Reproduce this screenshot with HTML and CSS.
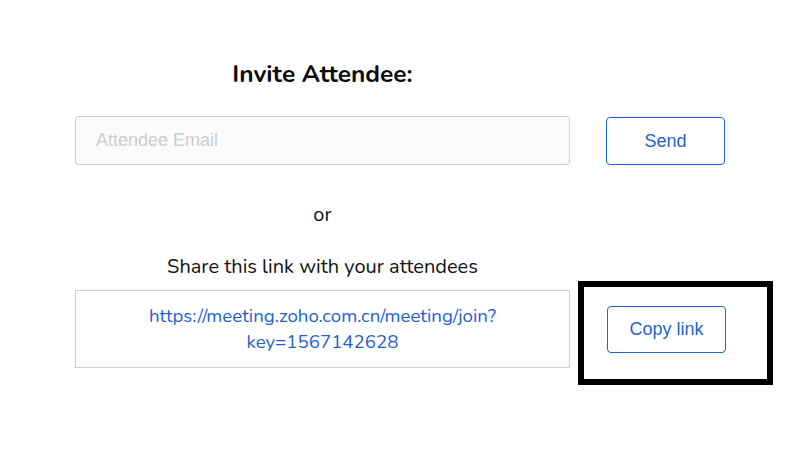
FILE: index.html
```html
<!DOCTYPE html>
<html>
<head>
<meta charset="utf-8">
<link rel="stylesheet" href="styles.css">
</head>
<body>
<div class="page">
  <h1 class="title">Invite Attendee:</h1>
  <div class="row invite-row">
    <input class="email" type="text" placeholder="Attendee Email">
    <button class="btn send">Send</button>
  </div>
  <div class="or">or</div>
  <div class="share">Share this link with your attendees</div>
  <div class="row link-row">
    <div class="link-box">
      <a class="link">https://meeting.zoho.com.cn/meeting/join?<br>key=1567142628</a>
    </div>
    <div class="highlight">
      <button class="btn copy">Copy link</button>
    </div>
  </div>
</div>
</body>
</html>
```

FILE: styles.css
```css
html, body {
  margin: 0;
  padding: 0;
  background: #fff;
}
.page {
  padding: 58px 0 0 75px;
  font-family: "Nunito", "Lato", "Open Sans", sans-serif;
  color: #111;
}
.title {
  width: 495px;
  margin: 0;
  text-align: center;
  font-size: 24.5px;
  font-weight: 700;
  line-height: 32px;
  color: #0a0a0a;
}
.row {
  display: flex;
}
.invite-row {
  margin-top: 26px;
  align-items: flex-start;
}
.email {
  box-sizing: border-box;
  width: 495px;
  height: 49px;
  border: 1px solid #cfcfcf;
  border-radius: 3px;
  background: #fbfbfb;
  padding: 0 20px;
  font-family: "Liberation Sans", Arial, sans-serif;
  font-size: 18px;
  outline: none;
}
.email::placeholder {
  color: #cdcdcd;
}
.btn {
  box-sizing: border-box;
  width: 119px;
  height: 48px;
  background: #fff;
  border: 1px solid #1f63d2;
  border-radius: 4px;
  color: #1f63d2;
  font-family: "Liberation Sans", Arial, sans-serif;
  font-size: 18px;
  padding: 0;
}
.send {
  margin-left: 36px;
  margin-top: 1px;
}
.or {
  width: 495px;
  text-align: center;
  font-size: 20px;
  line-height: 24px;
  margin-top: 38px;
}
.share {
  width: 495px;
  text-align: center;
  font-size: 20px;
  line-height: 24px;
  margin-top: 28px;
}
.link-row {
  margin-top: 2px;
  align-items: flex-start;
}
.link-box {
  box-sizing: border-box;
  width: 495px;
  height: 78px;
  margin-top: 9px;
  border: 1px solid #cfcfcf;
  display: flex;
  align-items: center;
  justify-content: center;
  text-align: center;
}
.link {
  color: #1f5fd4;
  font-size: 18.7px;
  line-height: 26px;
}
.highlight {
  box-sizing: border-box;
  width: 195px;
  height: 104px;
  margin-left: 8px;
  border: 6px solid #000;
  padding: 19px 0 0 23px;
}
.copy {
  height: 47px;
}
```
